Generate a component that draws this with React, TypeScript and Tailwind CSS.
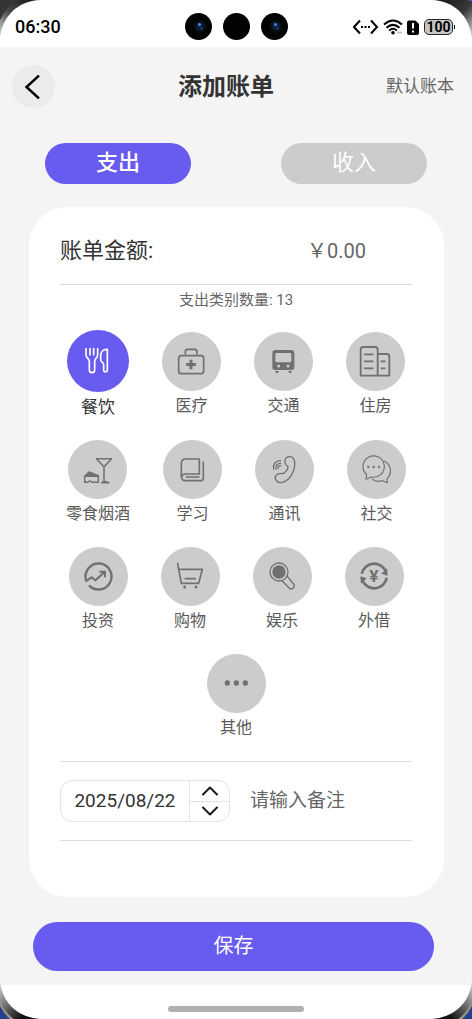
import { useState, type ReactNode } from "react";

type Category = { name: string; icon: ReactNode };

const categories: Category[] = [
  {
    name: "餐饮",
    icon: (
      <g strokeWidth="5">
        <path d="M57 56V74C57 84 67 86 67 94V120A8 8 0 0 0 83 120V94C83 86 92 84 92 74V56M69 56V75M80 56V75" />
        <path d="M121 58C108 57 101 66 101 78V90C101 96 110 97 110 104V122A6 6 0 0 0 121 122Z" />
      </g>
    ),
  },
  {
    name: "医疗",
    icon: (
      <g strokeWidth="5">
        <rect x="50" y="71" width="75" height="54" rx="8" />
        <path d="M70 66V59A7 7 0 0 1 77 52H98A7 7 0 0 1 105 59V66" />
        <path d="M87 83V112M72.500 97.500H101.500" strokeWidth="9" strokeLinecap="butt" />
      </g>
    ),
  },
  {
    name: "交通",
    icon: (
      <g stroke="none">
        <path
          fill="currentColor"
          fillRule="evenodd"
          d="M65 54H111A10 10 0 0 1 121 64V106A8 8 0 0 1 113 114H63A8 8 0 0 1 55 106V64A10 10 0 0 1 65 54ZM68 63A4 4 0 0 0 64 67V87A4 4 0 0 0 68 91H108A4 4 0 0 0 112 87V67A4 4 0 0 0 108 63ZM74 97.500A4.500 4.500 0 1 0 74 106.500A4.500 4.500 0 1 0 74 97.500ZM102 97.500A4.500 4.500 0 1 0 102 106.500A4.500 4.500 0 1 0 102 97.500Z"
        />
        <path fill="currentColor" d="M64 117H74V121Q69 126 64 121ZM103 117H113V121Q108 126 103 121Z" />
      </g>
    ),
  },
  {
    name: "住房",
    icon: (
      <g strokeWidth="5.500" strokeLinecap="butt">
        <path d="M44 131V53A8 8 0 0 1 52 45H87A8 8 0 0 1 95 53V131ZM95 66H122A8 8 0 0 1 130 74V131H95M54 67H82M54 88H82M54 109H82M104 88H118M104 109H118" />
      </g>
    ),
  },
  {
    name: "零食烟酒",
    icon: (
      <g strokeWidth="4.500">
        <path d="M85 56H131L108 80ZM108 80V126M101 128L108 124L123 128Z" />
        <path d="M50 109V127H59Q66 119 71 127H91V109Z" />
        <path d="M50 109L63 96L91 107Z" fill="currentColor" />
      </g>
    ),
  },
  {
    name: "学习",
    icon: (
      <g strokeWidth="5">
        <path d="M55 112V70Q55 57 69 57H109V102H66A10 10 0 0 0 66 122H114Q121 122 121 115V67M70 111H108" />
      </g>
    ),
  },
  {
    name: "通讯",
    icon: (
      <g strokeWidth="4">
        <path d="M92 56C99 45 116 48 119 66C121 92 104 125 78 128C64 129 57 114 63 106C70 97 81 102 84 101C92 96 99 89 99 80C90 74 88 64 92 56Z" />
        <path d="M56 87C53 73 62 61 77 62M63 87C60 77 68 69 77 70M69 85C68 80 72 76 77 77" />
      </g>
    ),
  },
  {
    name: "社交",
    icon: (
      <g strokeWidth="3.500">
        <path d="M59 104A32 32 0 1 1 73 111L57 118Z" />
        <path d="M112 63C135 75 135 103 120 116L121 128L106 122C96 125 84 124 76 118" />
        <g fill="currentColor" stroke="none">
          <circle cx="64" cy="81" r="3.500" />
          <circle cx="80" cy="81" r="3.500" />
          <circle cx="96" cy="81" r="3.500" />
        </g>
      </g>
    ),
  },
  {
    name: "投资",
    icon: (
      <g strokeWidth="7" strokeLinecap="butt" strokeLinejoin="miter">
        <path d="M60 115A39 39 0 1 0 51 99" />
        <path d="M49 104L68 91L79 100L107 75M91 74H108V91" strokeWidth="6" />
      </g>
    ),
  },
  {
    name: "购物",
    icon: (
      <g strokeWidth="5">
        <path d="M50 50L61 109H113L124 67H54M73 95H103" />
        <g fill="currentColor" stroke="none">
          <circle cx="71" cy="120" r="4.500" />
          <circle cx="105" cy="120" r="4.500" />
        </g>
      </g>
    ),
  },
  {
    name: "娱乐",
    icon: (
      <g strokeWidth="4">
        <circle cx="78" cy="75" r="27" />
        <circle cx="78" cy="75" r="20" fill="currentColor" stroke="none" />
        <path d="M87 101L109 124C116 130 128 120 122 111L103 88" />
      </g>
    ),
  },
  {
    name: "外借",
    icon: (
      <g strokeWidth="8" strokeLinecap="butt">
        <path d="M50 80A38 38 0 0 1 122 73M125 92A38 38 0 0 1 53 102" />
        <path
          d="M109 80L128 86L126 64ZM65 94L46 88L48 110Z"
          fill="currentColor"
          stroke="none"
        />
        <text
          x="87"
          y="106"
          textAnchor="middle"
          fill="currentColor"
          stroke="none"
          className="font-['Roboto'] text-[52px] font-bold"
        >
          ¥
        </text>
      </g>
    ),
  },
  {
    name: "其他",
    icon: (
      <g fill="currentColor" stroke="none">
        <circle cx="61" cy="87" r="8" />
        <circle cx="88" cy="87" r="8" />
        <circle cx="115" cy="87" r="8" />
      </g>
    ),
  },
];

function Camera({ lens }: { lens?: boolean }) {
  return (
    <svg viewBox="0 0 27 27" className="size-[27px]" aria-hidden="true">
      <circle cx="13.500" cy="13.500" r="13.500" fill="#020203" />
      {lens && (
        <>
          <circle cx="15" cy="13.500" r="6.500" fill="#0b0d12" />
          <circle cx="15" cy="13.500" r="4" fill="#0c1d38" />
          <circle cx="14.500" cy="11.500" r="1.500" fill="#3f8fe0" />
          <circle cx="16.500" cy="15.500" r="1" fill="#1d4c88" />
        </>
      )}
    </svg>
  );
}

function StatusBar() {
  return (
    <div className="relative flex h-[47px] items-center justify-between pt-[7px] pr-[17px] pl-[15px]">
      <span className="text-lg leading-6 font-medium text-black">06:30</span>
      <div className="absolute inset-x-0 top-[13px] flex justify-center gap-[11px]">
        <Camera lens />
        <Camera />
        <Camera lens />
      </div>
      <div className="flex items-center gap-1 text-black">
        <svg viewBox="0 0 26 16" className="h-4 w-[26px]" fill="none" stroke="currentColor" strokeWidth="2" aria-hidden="true">
          <path d="M7 1.500L1 8L7 14.500M18 1.500L24 8L18 14.500" />
          <path d="M8 8H10M11.500 8H13.500M15 8H17" />
        </svg>
        <svg viewBox="0 0 20 16" className="h-4 w-5" fill="none" stroke="currentColor" strokeWidth="2" aria-hidden="true">
          <path d="M1 5.500Q10 -2.500 19 5.500M3.500 8.700Q10 3 16.500 8.700M6.200 11.500Q10 8 13.800 11.500" />
          <circle cx="10" cy="13.700" r="1.800" fill="currentColor" stroke="none" />
          <path d="M14 13.500H19" stroke="#c4c4c4" />
        </svg>
        <svg viewBox="0 0 12 15" className="h-[15px] w-3" aria-hidden="true">
          <path d="M2 0.500H8.500L12 4V13Q12 15 10 15H2Q0 15 0 13V2.500Q0 0.500 2 0.500Z" fill="currentColor" />
          <path d="M6 3V8.500M6 10.500V12.500" stroke="white" strokeWidth="2" />
        </svg>
        <div className="ml-px flex items-center gap-px">
          <span className="flex h-4 w-[29px] items-center justify-center rounded-[5px] border border-neutral-800 bg-[#c6c6c6] text-sm leading-4 font-bold">
            100
          </span>
          <span className="h-1 w-px bg-black" />
        </div>
      </div>
    </div>
  );
}

function Bezel() {
  return (
    <>
      <svg viewBox="0 0 40 40" className="pointer-events-none absolute top-0 left-0 size-10" aria-hidden="true">
        <defs>
          <linearGradient id="bezelTop" x1="1" y1="0" x2="0" y2="1">
            <stop offset="0" stopColor="#101010" />
            <stop offset="0.550" stopColor="#4a4a4a" />
            <stop offset="1" stopColor="#e4e4e4" />
          </linearGradient>
        </defs>
        <path d="M0 0H40C18 1 2 16 0 39Z" fill="url(#bezelTop)" />
        <path d="M0 0H18Q6 7 0 20Z" fill="#353535" />
      </svg>
      <svg viewBox="0 0 40 40" className="pointer-events-none absolute top-0 right-0 size-10" aria-hidden="true">
        <path d="M40 0H0C22 1 38 16 40 39Z" fill="url(#bezelTopRight)" />
        <defs>
          <linearGradient id="bezelTopRight" x1="0" y1="0" x2="1" y2="1">
            <stop offset="0" stopColor="#101010" />
            <stop offset="0.550" stopColor="#3a3a3a" />
            <stop offset="1" stopColor="#e4e4e4" />
          </linearGradient>
        </defs>
        <path d="M35 0H40V1Z" fill="#7c4dff" />
      </svg>
      <svg viewBox="0 0 40 40" className="pointer-events-none absolute bottom-0 left-0 size-10" aria-hidden="true">
        <defs>
          <linearGradient id="bezelBottom" x1="0" y1="0" x2="1" y2="1">
            <stop offset="0" stopColor="#dedede" />
            <stop offset="0.500" stopColor="#555555" />
            <stop offset="0.750" stopColor="#111111" />
          </linearGradient>
        </defs>
        <path d="M0 0C1 22 16 38 40 40H0Z" fill="url(#bezelBottom)" />
        <path d="M0 22Q4 33 14 40H0Z" fill="#9b9283" />
        <path d="M0 27Q4 35 10 40H0Z" fill="#24408a" />
      </svg>
      <svg viewBox="0 0 40 40" className="pointer-events-none absolute right-0 bottom-0 size-10" aria-hidden="true">
        <g transform="translate(40 0) scale(-1 1)">
          <path d="M0 0C1 22 16 38 40 40H0Z" fill="url(#bezelBottom)" />
          <path d="M0 22Q4 33 14 40H0Z" fill="#9b9283" />
          <path d="M0 27Q4 35 10 40H0Z" fill="#24408a" />
        </g>
      </svg>
    </>
  );
}

function CategoryButton({
  category,
  selected,
  onSelect,
}: {
  category: Category;
  selected: boolean;
  onSelect: () => void;
}) {
  return (
    <button type="button" aria-pressed={selected} onClick={onSelect} className="flex flex-col items-center gap-1">
      <span
        className={
          selected
            ? "size-[62px] rounded-full bg-[#675bf0] text-white"
            : "size-[59px] rounded-full bg-[#cccccc] text-[#707070]"
        }
      >
        <svg
          viewBox={selected ? "0 0 186 186" : "0 0 177 177"}
          className="size-full"
          fill="none"
          stroke="currentColor"
          strokeLinecap="round"
          strokeLinejoin="round"
          aria-hidden="true"
        >
          {category.icon}
        </svg>
      </span>
      <span
        className={
          selected ? "text-[17px] leading-[22px] text-[#333333]" : "text-base leading-[22px] text-[#595959]"
        }
      >
        {category.name}
      </span>
    </button>
  );
}

function formatDate(date: Date) {
  const month = String(date.getMonth() + 1).padStart(2, "0");
  const day = String(date.getDate()).padStart(2, "0");
  return `${date.getFullYear()}/${month}/${day}`;
}

export default function App() {
  const [kind, setKind] = useState("支出");
  const [selected, setSelected] = useState("餐饮");
  const [date, setDate] = useState(new Date(2025, 7, 22));

  const shiftDay = (days: number) =>
    setDate((d) => new Date(d.getFullYear(), d.getMonth(), d.getDate() + days));

  return (
    <div className="relative flex min-h-screen flex-col bg-white font-['Roboto','Noto_Sans_CJK_SC',sans-serif]">
      <StatusBar />
      <main className="flex grow flex-col bg-[#f4f4f4] pb-3.5">
        <header className="grid grid-cols-3 items-center pt-[18px] pr-[18px] pl-3">
          <button
            type="button"
            aria-label="返回"
            className="flex size-[43px] items-center justify-center rounded-full bg-[#ebebeb]"
          >
            <svg viewBox="0 0 24 24" className="size-6" fill="none" stroke="black" strokeWidth="2.400" aria-hidden="true">
              <path d="M17 0.500L4.500 12L17 23.500" />
            </svg>
          </button>
          <h1 className="pr-3.5 text-center text-2xl font-bold whitespace-nowrap text-[#333333]">添加账单</h1>
          <button type="button" className="text-right text-[17px] text-[#666666]">
            默认账本
          </button>
        </header>

        <div className="mt-[35px] flex justify-between px-[45px]">
          {["支出", "收入"].map((name) => (
            <button
              key={name}
              type="button"
              aria-pressed={kind === name}
              onClick={() => setKind(name)}
              className={
                kind === name
                  ? "h-[41px] w-[146px] rounded-full bg-[#675bf0] pb-0.5 text-[22px] leading-8 font-medium text-white"
                  : "h-[41px] w-[146px] rounded-full bg-[#cccccc] pb-0.5 text-[22px] leading-8 text-white"
              }
            >
              {name}
            </button>
          ))}
        </div>

        <section className="mr-7 ml-[29px] mt-[23px] grow rounded-[38px] bg-white pr-8 pl-[31px]">
          <div className="flex h-[78px] items-center justify-between border-b border-[#dcdcdc] pt-2.5">
            <label htmlFor="amount" className="text-[22px] leading-8 text-[#333333]">
              账单金额:
            </label>
            <input
              id="amount"
              inputMode="decimal"
              placeholder="￥0.00"
              className="w-[105px] bg-transparent text-xl text-[#333333] outline-none placeholder:text-[#666666]"
            />
          </div>
          <p className="pt-[5px] text-center text-[15px] leading-5 text-[#666666]">支出类别数量: 13</p>

          <div className="flex flex-wrap items-center justify-center gap-x-[33px] gap-y-[22px] border-b border-[#dcdcdc] pt-5 pb-[22px]">
            {categories.map((category) => (
              <CategoryButton
                key={category.name}
                category={category}
                selected={category.name === selected}
                onSelect={() => setSelected(category.name)}
              />
            ))}
          </div>

          <div className="flex h-[79px] items-center gap-5 border-b border-[#dcdcdc]">
            <div className="flex h-[42px] w-[170px] shrink-0 overflow-hidden rounded-xl border border-[#e4e4e4]">
              <input
                aria-label="日期"
                readOnly
                value={formatDate(date)}
                className="w-0 grow bg-transparent text-center text-[19px] text-[#333333] outline-none"
              />
              <div className="flex w-10 flex-col border-l border-[#e4e4e4]">
                <button
                  type="button"
                  aria-label="后一天"
                  onClick={() => shiftDay(1)}
                  className="flex grow items-center justify-center border-b border-[#e4e4e4]"
                >
                  <svg viewBox="0 0 18 10" className="h-2.5 w-[18px]" fill="none" stroke="#1a1a1a" strokeWidth="2" strokeLinecap="round" strokeLinejoin="round" aria-hidden="true">
                    <path d="M2 8.500L9 1.500L16 8.500" />
                  </svg>
                </button>
                <button
                  type="button"
                  aria-label="前一天"
                  onClick={() => shiftDay(-1)}
                  className="flex grow items-center justify-center"
                >
                  <svg viewBox="0 0 18 10" className="h-2.5 w-[18px]" fill="none" stroke="#1a1a1a" strokeWidth="2" strokeLinecap="round" strokeLinejoin="round" aria-hidden="true">
                    <path d="M2 1.500L9 8.500L16 1.500" />
                  </svg>
                </button>
              </div>
            </div>
            <input
              aria-label="备注"
              placeholder="请输入备注"
              className="w-0 grow bg-transparent text-[19px] text-[#333333] outline-none placeholder:text-[#666666]"
            />
          </div>
        </section>

        <button
          type="button"
          className="mt-[25px] mr-[38px] ml-[33px] h-[49px] rounded-full bg-[#675bf0] pb-0.5 text-xl text-white"
        >
          保存
        </button>
      </main>
      <div className="flex h-[34px] justify-center pt-[21px]">
        <span className="h-1.5 w-[136px] rounded-full bg-[#b0b0b0]" />
      </div>
      <Bezel />
    </div>
  );
}
